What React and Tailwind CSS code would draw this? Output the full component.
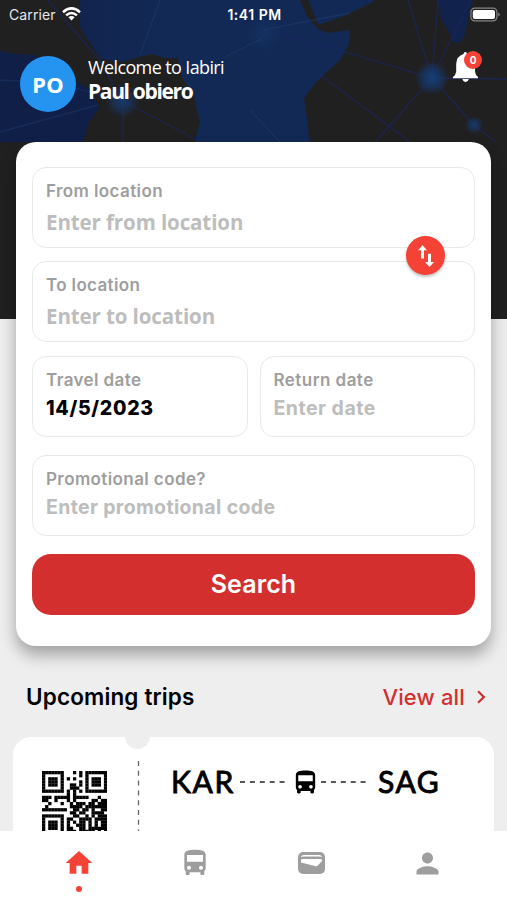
import React from "react";
import { MdHome, MdPerson, MdDirectionsBus, MdChevronRight } from "react-icons/md";

const QR = [
  "111111100010101111111",
  "100000100000101000001",
  "101110101010001011101",
  "101110100000101011101",
  "101110100110101011101",
  "100000100111001000001",
  "111111101010101111111",
  "000000001010000000000",
  "111011111011111000100",
  "110010001010000011011",
  "001000100101110110111",
  "010000000111101111111",
  "111111110011011010011",
  "000000000110110011110",
  "111111100011001010111",
  "100000101100111101111",
  "101110101010110101011",
  "101110101001110101011",
  "101110101100110111111",
  "100000101110111110101",
  "101110101100110100110",
];

function Backdrop() {
  return (
    <svg className="absolute inset-0 h-[142px] w-full" viewBox="0 0 507 142" preserveAspectRatio="none">
      <defs>
        <linearGradient id="sea" x1="0" x2="1">
          <stop offset="0" stopColor="#11244e" />
          <stop offset="0.3" stopColor="#122955" />
          <stop offset="1" stopColor="#122955" />
        </linearGradient>
        <radialGradient id="glow">
          <stop offset="0" stopColor="#173f78" />
          <stop offset="0.5" stopColor="#153a70" stopOpacity="0.7" />
          <stop offset="1" stopColor="#153a70" stopOpacity="0" />
        </radialGradient>
      </defs>
      <rect width="507" height="142" fill="#202020" />
      <path fill="#101f47" d="M0 51 L15 54 L36 55 L52 66 L75 80 L92 91 L99 108 L88 123 L83 142 H0Z" />
      <path fill="url(#sea)" d="M80 0 L80 28 L92 46 L101 59 L122 62 L139 57 L153 54 L165 58 L178 58 L182 77 L194 97 L200 122 L195 142 H309 L308 126 L304 98 L317 81 L340 60 L349 44 L350 30 L328 33 L318 29 L307 16 L300 0Z" />
      <path fill="#122955" d="M308 0 L319 25 L344 16 L373 2 L374 0Z" />
      <path fill="#11234c" d="M437 0 L441 18 L448 30 L453 42 L460 43 L465 34 L472 0Z" />
      <g stroke="#1b2760" strokeWidth="1.3" opacity="0.75" fill="none">
        <path d="M408 0 L432 78 L438 0 M432 78 L471 0 M432 78 L345 52 L263 30 M432 78 L507 79 M432 78 L474 125 L496 142 M432 78 L375 142 M295 56 L410 142 M48 0 L98 58 L122 100 M45 80 L123 101 L195 139 M123 101 V142" />
        <path stroke="#26477f" opacity="0.45" d="M0 80 L40 82 M0 132 L98 105 M140 55 L160 0 M263 30 L350 13 M225 57 L263 38 M250 110 L280 142" />
      </g>
      <circle cx="432" cy="78" r="17" fill="url(#glow)" />
      <circle cx="474" cy="125" r="9" fill="url(#glow)" opacity="0.8" />
      <circle cx="122" cy="101" r="17" fill="url(#glow)" opacity="0.8" />
      <circle cx="264" cy="34" r="17" fill="url(#glow)" opacity="0.35" />
    </svg>
  );
}

function StatusBar() {
  return (
    <div className="relative flex h-7 items-center justify-between pr-[6px] pl-[9px] text-[14px] text-white">
      <div className="flex w-24 items-center gap-[6px]">
        <span className="tracking-[0.1px] text-gray-200">Carrier</span>
        <svg className="h-[14px] w-[19px]" viewBox="0 0 19 14">
          <g fill="none" stroke="white" strokeWidth="2.5">
            <path d="M1 5.2 Q9.5 -2.4 18 5.2" />
            <path d="M4.1 8.4 Q9.5 3.5 14.9 8.4" />
          </g>
          <path d="M6.4 10.3 Q9.5 7.7 12.6 10.3 L9.5 13.6Z" fill="white" />
        </svg>
      </div>
      <span className="mr-[1px] text-[14px] font-semibold tracking-[0.5px]">1:41 PM</span>
      <div className="flex w-24 justify-end">
        <svg className="h-[15px] w-[31px]" viewBox="0 0 31 15">
          <rect x="0.9" y="1.1" width="26" height="12.8" rx="4" fill="none" stroke="#858585" strokeWidth="1.2" />
          <rect x="2.8" y="3" width="22.2" height="9" rx="2" fill="white" />
          <path d="M28.2 5.4 Q31.4 7.5 28.2 9.6Z" fill="#858585" />
        </svg>
      </div>
    </div>
  );
}

function Header() {
  return (
    <div className="relative flex h-[114px] items-start pr-[21px] pl-5">
      <div className="mt-7 flex size-[56px] items-center justify-center rounded-full bg-[#2494f0] font-['Noto_Sans',sans-serif] text-[22px] font-bold tracking-[0.2px] text-white">
        PO
      </div>
      <div className="mt-[27px] ml-[12px] grow font-['Open_Sans',sans-serif] text-white">
        <div className="text-[18px] leading-[24px] tracking-[-0.62px]">Welcome to Iabiri</div>
        <div className="text-[21px] leading-[24px] font-bold tracking-[-1.35px]">Paul obiero</div>
      </div>
      <div className="relative mt-[23px] h-8 w-[33px]">
        <svg className="h-8 w-[33px]" viewBox="0 0 33 32" fill="white">
          <path d="M11 1.6 Q12.3 0.6 13.6 1.6 L14 3 Q21.5 4.5 22 13 V20.5 Q22.4 24 25 26 V27.2 H0 V26 Q2.7 24 3.2 20.5 V13 Q3.6 5 10.6 3Z" />
          <path d="M9.4 28 H15.9 Q15 31 12.7 31 Q10.3 31 9.4 28Z" />
        </svg>
        <span className="absolute top-0 left-[11px] flex size-[18px] items-center justify-center rounded-full bg-[#f44336] text-[10px] font-bold text-white">
          0
        </span>
      </div>
    </div>
  );
}

function Field({ label, children, className }) {
  return (
    <div className={"h-[81px] rounded-[14px] border-[1.5px] border-[#e9e9e9] pl-[13px] " + className}>
      <div className="mt-[12px] text-[17px] leading-[22px] font-semibold text-[#9e9e9e]">{label}</div>
      {children}
    </div>
  );
}

function SearchCard() {
  const place = "mt-[7px] font-['Open_Sans',sans-serif] text-[20.5px] leading-[26px] font-bold tracking-[-0.1px] text-[#bdbdbd]";
  const value = "mt-[5px] text-[19.5px] leading-[24px] ";
  return (
    <section className="relative mx-4 flex h-[504px] flex-col rounded-[20px] bg-white px-[16px] pt-[25px] shadow-[0_9px_16px_rgba(0,0,0,0.32)]">
      <div className="relative flex flex-col gap-[13px]">
        <Field label="From location" className="tracking-[0.4px]">
          <div className={place}>Enter from location</div>
        </Field>
        <Field label="To location" className="tracking-[0.35px]">
          <div className={place}>Enter to location</div>
        </Field>
        <div className="absolute top-[69px] right-[30px] flex size-[39px] items-center justify-center rounded-full bg-[#f44336] text-white shadow-[0_2px_3px_rgba(0,0,0,0.25)]">
          <svg className="h-[24px] w-[18px]" viewBox="0 0 18 24" fill="currentColor">
            <path d="M5.5 1.3 L1 6.3 H4 V14.6 H7 V6.3 H10Z" />
            <path d="M12.5 23 L8 18 H11 V9.8 H14 V18 H17Z" />
          </svg>
        </div>
      </div>
      <div className="mt-[14px] grid grid-cols-2 gap-3">
        <Field label="Travel date" className="tracking-[0.4px]">
          <div className={value + "font-extrabold tracking-[0.7px] text-black"}>14/5/2023</div>
        </Field>
        <Field label="Return date" className="tracking-[0.45px]">
          <div className={value + "font-bold tracking-[0.5px] text-[#bdbdbd]"}>Enter date</div>
        </Field>
      </div>
      <Field label="Promotional code?" className="mt-[18px] tracking-[0.4px]">
        <div className={value + "font-bold tracking-[0.35px] text-[#bdbdbd]"}>Enter promotional code</div>
      </Field>
      <button className="mt-[18px] h-[61px] rounded-[19px] bg-[#d32f2f] text-[25px] font-semibold tracking-[0.1px] text-white">
        Search
      </button>
    </section>
  );
}

function Dashes({ className }) {
  return (
    <svg className={"h-[2px] w-[46px] " + className} viewBox="0 0 46 2">
      <path d="M0 1 H46" stroke="#222" strokeWidth="1.4" strokeDasharray="5 4.9" />
    </svg>
  );
}

function TripCard() {
  return (
    <div className="relative mx-[13px] mt-[24px] flex h-[163px] rounded-t-[18px] bg-white">
      <div className="absolute top-[-13px] left-[112px] size-[25px] rounded-full bg-[#eeeeee]" />
      <svg className="mt-[34px] ml-[29px] size-[65px] shrink-0" viewBox="0 0 21 21">
        {QR.map((row, y) => [...row].map((c, x) => (c === "1" ? <rect key={x + "-" + y} x={x} y={y} width="1.06" height="1.06" /> : null)))}
      </svg>
      <svg className="mt-[24px] ml-[30px] h-[90px] w-[3px] shrink-0" viewBox="0 0 3 90">
        <path d="M1.5 0 V90" stroke="#666" strokeWidth="1.3" strokeDasharray="5 4.8" />
      </svg>
      <div className="ml-[31px] grow">
        <div className="mt-[25px] flex h-10 items-center font-['Lato',sans-serif] text-[30px] font-normal tracking-[1.6px] text-black [-webkit-text-stroke:0.9px_black]">
          <span className="mt-[-2px] w-[63px]">KAR</span>
          <Dashes className="ml-[6px]" />
          <MdDirectionsBus size={29} className="ml-[5px] shrink-0" />
          <Dashes className="ml-[1px]" />
          <span className="mt-[-2px] ml-[11px]">SAG</span>
        </div>
        <div className="mt-[29px] ml-[70px] h-[2px] w-[123px] bg-[#b5b5b5]" />
      </div>
    </div>
  );
}

function Wallet() {
  return (
    <svg className="h-[22px] w-[27px]" viewBox="0 0 27 22">
      <rect width="27" height="22" rx="5" fill="#9e9e9e" />
      <path d="M3 5.2 Q3.3 2.9 6 2.9 H21 Q23.7 2.9 24 5.2 Q23.2 4.6 21 4.6 H6 Q3.8 4.6 3 5.2Z M3 8 Q3 7 5 7 H22 Q24 7 24 8 L24 9 L19.5 13.8 Q19 14.4 18 14.2 L3 10.6Z" fill="white" />
    </svg>
  );
}

function BottomNav() {
  return (
    <nav className="absolute inset-x-0 bottom-0 grid h-[69px] grid-cols-4 bg-white px-[21px] pt-[16px] text-[#9e9e9e]">
      <div className="flex flex-col items-center">
        <MdHome size={32} className="text-[#f44336]" />
        <span className="mt-[7px] size-[6px] rounded-full bg-[#f44336]" />
      </div>
      <div className="flex justify-center"><MdDirectionsBus size={32} /></div>
      <div className="flex justify-center pt-[5px]"><Wallet /></div>
      <div className="flex justify-center"><MdPerson size={33} /></div>
    </nav>
  );
}

export default function App() {
  return (
    <div className="relative h-[900px] w-[507px] overflow-hidden bg-[#eeeeee] font-['Inter',sans-serif]">
      <div className="absolute inset-x-0 top-0 h-[319px] bg-[#202020]">
        <Backdrop />
      </div>
      <StatusBar />
      <Header />
      <SearchCard />
      <div className="mt-[36px] flex h-[30px] items-center justify-between pr-[13px] pl-[26px] text-[22px] font-semibold">
        <h2 className="text-[22.5px] tracking-[0.15px] text-black">Upcoming trips</h2>
        <div className="flex items-center gap-[3px] font-medium tracking-[0.15px] text-[#d32f2f]">
          View all <MdChevronRight size={26} />
        </div>
      </div>
      <div className="pt-px">
        <TripCard />
      </div>
      <BottomNav />
    </div>
  );
}
